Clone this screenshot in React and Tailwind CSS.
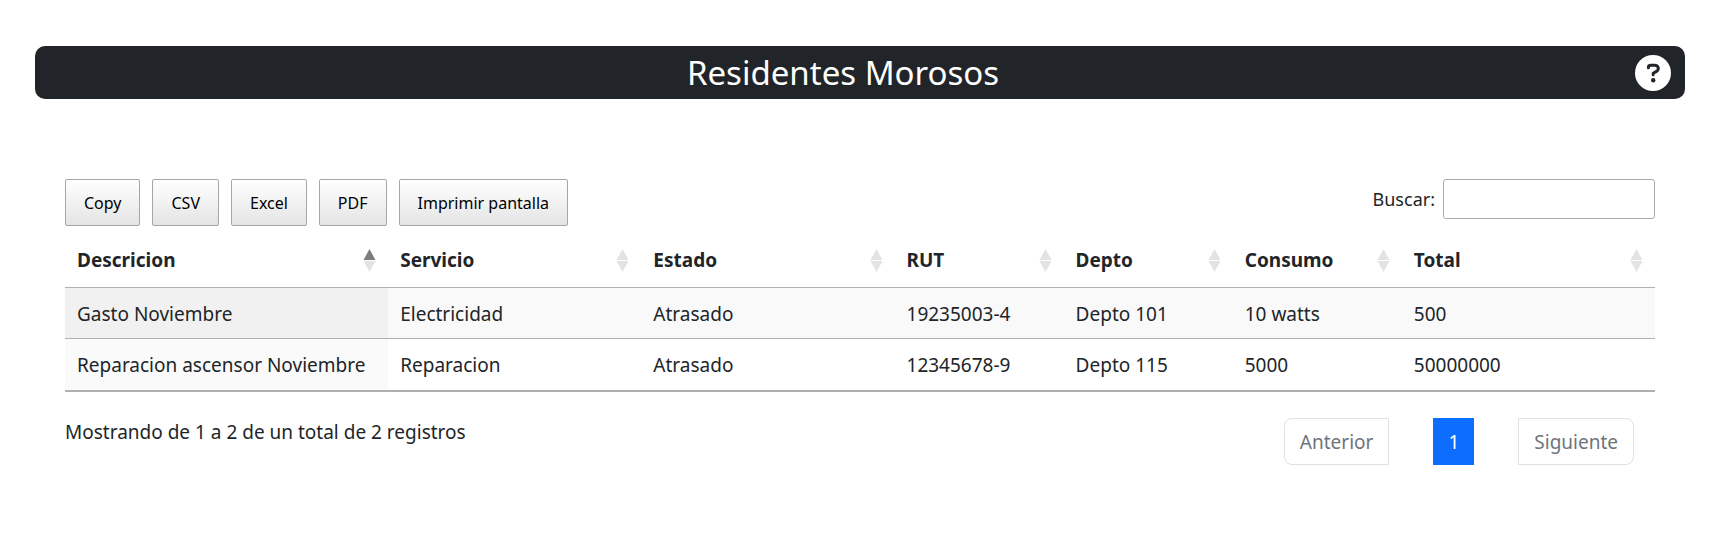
const exportButtons = ["Copy", "CSV", "Excel", "PDF", "Imprimir pantalla"];

const columns = [
  { label: "Descricion", width: "w-[323px]", sorted: true },
  { label: "Servicio", width: "w-[253px]" },
  { label: "Estado", width: "w-[253px]" },
  { label: "RUT", width: "w-[169px]" },
  { label: "Depto", width: "w-[169px]" },
  { label: "Consumo", width: "w-[169px]" },
  { label: "Total", width: "w-[253px]" },
];

const rows = [
  ["Gasto Noviembre", "Electricidad", "Atrasado", "19235003-4", "Depto 101", "10 watts", "500"],
  ["Reparacion ascensor Noviembre", "Reparacion", "Atrasado", "12345678-9", "Depto 115", "5000", "50000000"],
];

function SortIcon({ sorted }) {
  return (
    <svg width="13" height="23" viewBox="0 0 13 23" aria-hidden="true" className="shrink-0">
      <path d="M6.5 0 12.5 11H0.5Z" fill={sorted ? "#7d7d7d" : "#e3e3e3"} />
      <path d="M0.5 12H12.5L6.5 23Z" fill="#e3e3e3" />
    </svg>
  );
}

function HelpIcon() {
  return (
    <svg width="36" height="36" viewBox="0 0 36 36" aria-hidden="true">
      <circle cx="18" cy="18" r="18" fill="#fff" />
      <path
        d="M13.4 12.8v-.3c0-1.300 1-2.200 2.300-2.200h4.100c2 0 3.500 1.400 3.500 3.200 0 1.300-.7 2.300-1.800 2.900L18.200 18.300v1.400"
        fill="none"
        stroke="#212529"
        strokeWidth="3"
        strokeLinecap="round"
        strokeLinejoin="round"
      />
      <circle cx="18.200" cy="25.200" r="2.200" fill="#212529" />
    </svg>
  );
}

export default function App() {
  return (
    <main className="bg-white pt-[46px] pr-[33px] pb-20 pl-[35px] font-['Noto_Sans','Open_Sans',sans-serif] text-[19px] leading-7 text-[#212529]">
      <header className="flex h-[53px] items-center rounded-[10px] bg-[#212529] pr-[14px] pl-4 text-white">
        <h1 className="flex-1 text-center text-[33px] leading-9">Residentes Morosos</h1>
        <button type="button" aria-label="Ayuda" className="rounded-full">
          <HelpIcon />
        </button>
      </header>

      <section className="px-[30px] pt-20">
        <div className="flex items-start justify-between">
          <div className="flex gap-3">
            {exportButtons.map((label) => (
              <button
                key={label}
                type="button"
                className="h-[47px] rounded-[2px] border border-[#a6a6a6] bg-linear-to-b from-white to-[#e4e4e4] px-[18px] text-[16px] text-black"
              >
                {label}
              </button>
            ))}
          </div>
          <div className="flex items-center gap-2">
            <label htmlFor="buscar" className="text-[18px]">Buscar:</label>
            <input id="buscar" type="search" className="h-10 w-[212px] rounded-[3px] border border-[#aaa] bg-white px-2" />
          </div>
        </div>

        <table className="mt-2 w-full table-fixed border-separate border-spacing-0 border-b border-[#b0b0b0] text-left">
          <thead>
            <tr>
              {columns.map(({ label, width, sorted }) => (
                <th
                  key={label}
                  scope="col"
                  aria-sort={sorted ? "ascending" : undefined}
                  className={`${width} border-b border-[#b0b0b0] px-3 pt-3 pb-[13px] font-bold`}
                >
                  <button type="button" className="flex w-full items-center justify-between text-left">
                    {label}
                    <SortIcon sorted={sorted} />
                  </button>
                </th>
              ))}
            </tr>
          </thead>
          <tbody>
            {rows.map((row, r) => (
              <tr key={row[0]} className={r % 2 === 0 ? "bg-[#f9f9f9]" : "bg-white"}>
                {row.map((cell, c) => (
                  <td
                    key={columns[c].label}
                    className={`border-b border-[#b0b0b0] px-3 pt-3 ${r % 2 === 0 ? "pb-[10px]" : "pb-[11px]"} ${
                      c === 0 ? (r % 2 === 0 ? "bg-[#f1f1f1]" : "bg-[#fafafa]") : ""
                    }`}
                  >
                    {cell}
                  </td>
                ))}
              </tr>
            ))}
          </tbody>
        </table>

        <div className="flex items-start justify-between pt-[26px]">
          <p>Mostrando de 1 a 2 de un total de 2 registros</p>
          <nav aria-label="Paginación" className="flex gap-11 pr-[21px] text-[#6c757d]">
            <button type="button" className="h-[47px] rounded-l-[8px] border border-[#dee2e6] px-[15px]">
              Anterior
            </button>
            <button type="button" aria-current="page" className="h-[47px] bg-[#0d6efd] px-[15px] text-white">
              1
            </button>
            <button type="button" className="h-[47px] rounded-r-[8px] border border-[#dee2e6] px-[15px]">
              Siguiente
            </button>
          </nav>
        </div>
      </section>
    </main>
  );
}
